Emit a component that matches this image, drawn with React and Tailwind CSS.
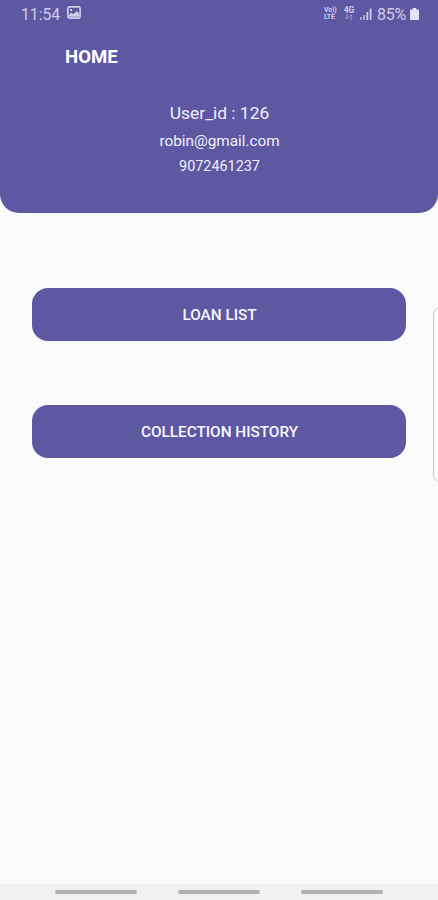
function StatusBar() {
  return (
    <div className="flex h-7 items-center justify-between pl-[21px] pr-[19px] text-[#d0cce8]">
      <div className="flex items-center gap-[7px]">
        <span className="pt-px text-[15.7px] leading-7">11:54</span>
        <svg className="mb-[3px] h-[13px] w-[14px]" viewBox="0 0 14 13" fill="none" stroke="currentColor" strokeWidth="1.7">
          <rect x="0.9" y="0.9" width="12.2" height="11.2" rx="1.5" />
          <path d="M2 10.8V8.7L4.6 6.4L6.4 8.2L9.7 4.9L12 7.2V10.8Z" fill="currentColor" stroke="none" />
          <rect x="3" y="3" width="2" height="2" fill="currentColor" stroke="none" />
        </svg>
      </div>
      <div className="flex items-center">
        <div className="mb-px flex w-[14px] flex-col text-[7px] font-bold leading-[7px] tracking-[-0.2px]">
          <span>Vo))</span>
          <span>LTE</span>
        </div>
        <div className="mb-[2px] ml-[5px] flex w-[12px] flex-col items-center">
          <span className="text-[8.5px] font-bold leading-[8px]">4G</span>
          <svg className="h-[6px] w-[8px] opacity-60" viewBox="0 0 8 6" fill="none" stroke="currentColor">
            <path d="M2 0V5M0.5 3.5L2 5L3.5 3.5M6 6V1M4.5 2.5L6 1L7.5 2.5" />
          </svg>
        </div>
        <svg className="mb-px ml-[5px] h-[12px] w-[12px]" viewBox="0 0 12 12" fill="currentColor">
          <rect x="0" y="9" width="1.7" height="3" opacity="0.7" />
          <rect x="3.2" y="7" width="1.7" height="5" opacity="0.8" />
          <rect x="6.4" y="4" width="1.8" height="8" />
          <rect x="9.7" y="0.5" width="1.8" height="11.5" />
        </svg>
        <span className="ml-[5px] w-[31px] whitespace-nowrap pt-px text-[16px] leading-7 tracking-[-0.2px]">85%</span>
        <svg className="mb-px ml-[2px] h-[12px] w-[9px] text-[#e4e1f4]" viewBox="0 0 9 13" preserveAspectRatio="none" fill="currentColor">
          <path d="M2.7 0H6.3V1.5H8C8.6 1.5 9 1.9 9 2.5V12C9 12.6 8.6 13 8 13H1C0.4 13 0 12.6 0 12V2.5C0 1.9 0.4 1.5 1 1.5H2.7Z" />
        </svg>
      </div>
    </div>
  );
}

function MenuButton({ children, className = "" }) {
  return (
    <button
      className={`flex h-[53px] w-full items-center justify-center rounded-[16px] bg-[#5e58a2] pl-px pt-[2px] text-[15.3px] font-medium text-[#f8f7ff] ${className}`}
    >
      {children}
    </button>
  );
}

export default function App() {
  return (
    <div className="relative flex h-[900px] w-[438px] flex-col overflow-hidden bg-[#fafafa] font-[Roboto,sans-serif]">
      <header className="h-[213px] rounded-b-[19px] bg-[#5e58a2]">
        <StatusBar />
        <div className="flex h-[58px] items-center border-b border-[#5b559f] pl-[65px]">
          <h1 className="text-[18.6px] font-bold leading-6 text-white">HOME</h1>
        </div>
        <div className="flex flex-col items-center pl-px pt-[13px] text-[#f0eff9]">
          <p className="text-[17.4px] leading-[28px]">User_id : 126</p>
          <p className="mt-px text-[15.3px] leading-[26px]">robin@gmail.com</p>
          <p className="text-[14.4px] leading-[25px]">9072461237</p>
        </div>
      </header>

      <main className="flex flex-1 flex-col px-8 pt-[75px]">
        <MenuButton>LOAN LIST</MenuButton>
        <MenuButton className="mt-16">COLLECTION HISTORY</MenuButton>
      </main>

      <div className="absolute left-[433px] top-[307px] h-[175px] w-[20px] rounded-[7px] border border-[#c9c9c9] bg-[#fdfdfd]" />

      <nav className="flex h-4 items-center justify-center gap-[41px] bg-[#f1f1f1]">
        <span className="h-1 w-[82px] rounded-full bg-[#b0b0b0]" />
        <span className="h-1 w-[82px] rounded-full bg-[#b0b0b0]" />
        <span className="h-1 w-[82px] rounded-full bg-[#b0b0b0]" />
      </nav>
    </div>
  );
}
